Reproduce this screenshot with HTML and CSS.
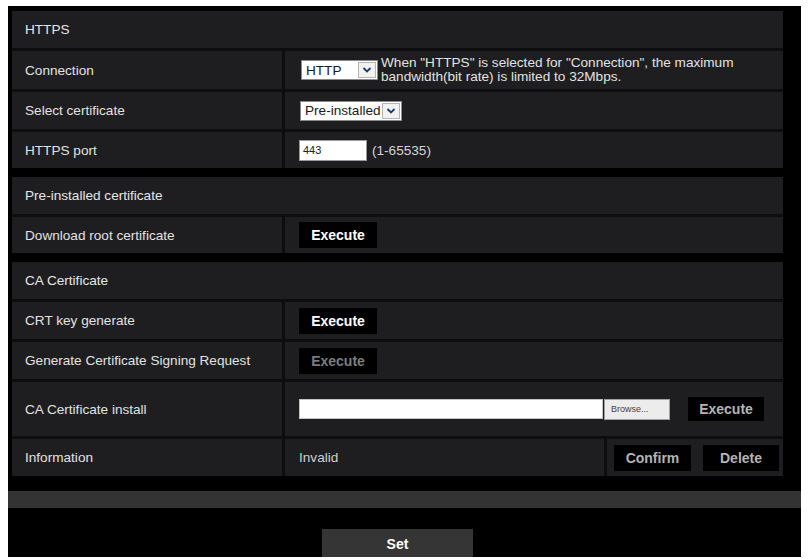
FILE: index.html
```html
<!DOCTYPE html>
<html lang="en">
<head>
  <meta charset="UTF-8">
  <title>HTTPS</title>
  <link rel="stylesheet" href="styles.css">
</head>
<body>
  <div class="frame">

    <!-- HTTPS connection settings -->
    <section class="group">
      <div class="group-head">HTTPS</div>
      <div class="row row-conn">
        <div class="label">Connection</div>
        <div class="value">
          <span class="select select-http">
            <span class="select-text">HTTP</span>
            <span class="select-arrow"><svg width="10" height="8" viewBox="0 0 10 8"><polyline points="1.5,2 5,5.5 8.5,2" fill="none" stroke="#1d3c6e" stroke-width="1.8"/></svg></span>
          </span>
          <span class="note">When "HTTPS" is selected for "Connection", the maximum<br>bandwidth(bit rate) is limited to 32Mbps.</span>
        </div>
      </div>
      <div class="row">
        <div class="label">Select certificate</div>
        <div class="value">
          <span class="select select-cert">
            <span class="select-text">Pre-installed</span>
            <span class="select-arrow"><svg width="10" height="8" viewBox="0 0 10 8"><polyline points="1.5,2 5,5.5 8.5,2" fill="none" stroke="#1d3c6e" stroke-width="1.8"/></svg></span>
          </span>
        </div>
      </div>
      <div class="row row-port">
        <div class="label">HTTPS port</div>
        <div class="value">
          <span class="field field-port">443</span>
          <span class="range">(1-65535)</span>
        </div>
      </div>
    </section>

    <!-- Pre-installed certificate -->
    <section class="group">
      <div class="group-head">Pre-installed certificate</div>
      <div class="row row-short">
        <div class="label">Download root certificate</div>
        <div class="value"><button class="btn">Execute</button></div>
      </div>
    </section>

    <!-- CA certificate -->
    <section class="group">
      <div class="group-head">CA Certificate</div>
      <div class="row">
        <div class="label">CRT key generate</div>
        <div class="value"><button class="btn">Execute</button></div>
      </div>
      <div class="row">
        <div class="label">Generate Certificate Signing Request</div>
        <div class="value"><button class="btn btn-disabled">Execute</button></div>
      </div>
      <div class="row row-install">
        <div class="label">CA Certificate install</div>
        <div class="value">
          <span class="field field-file"></span>
          <span class="browse">Browse...</span>
          <button class="btn btn-muted btn-install">Execute</button>
        </div>
      </div>
      <div class="row row-info">
        <div class="label">Information</div>
        <div class="value status">Invalid</div>
        <div class="value tools">
          <button class="btn btn-muted btn-confirm">Confirm</button>
          <button class="btn btn-muted btn-delete">Delete</button>
        </div>
      </div>
    </section>

    <div class="bar"></div>

    <div class="actions">
      <button class="btn-set">Set</button>
    </div>
  </div>
</body>
</html>
```

FILE: styles.css
```css
body {
  margin: 0;
  background: #fff;
  font-family: "Liberation Sans", Arial, sans-serif;
}
.frame {
  margin: 6px 0 0 8px;
  width: 793px;
  height: 551px;
  box-sizing: border-box;
  padding: 5px 18px 0 4px;
  background: #000;
  overflow: hidden;
}
.group {
  display: flex;
  flex-direction: column;
  gap: 3px;
  background: #0d0d0e;
}
.group + .group {
  margin-top: 9px;
}
.group-head {
  height: 37px;
  display: flex;
  align-items: center;
  padding-left: 13px;
  background: #1e1e20;
  color: #e6e6e6;
  font-size: 13.6px;
}
.row {
  display: grid;
  grid-template-columns: 270px 1fr;
  column-gap: 3px;
  height: 37px;
}
.row-conn {
  height: 38px;
}
.row-port,
.row-short {
  height: 36px;
}
.row-install {
  height: 54px;
}
.row-info {
  grid-template-columns: 270px 1fr 176px;
}
.label,
.value {
  display: flex;
  align-items: center;
  padding-left: 13px;
  background: #1e1e20;
  color: #e2e2e2;
  font-size: 13.6px;
}
.value {
  padding-left: 14px;
}

/* drop-down lists */
.select {
  display: inline-flex;
  align-items: center;
  height: 20px;
  box-sizing: border-box;
  border: 1px solid #8a8a8a;
  background: #fff;
  color: #1a1a1a;
  flex: none;
}
.select-text {
  flex: 1;
  padding-left: 4px;
  font-size: 13.6px;
}
.select-http {
  width: 77px;
  margin-left: 2px;
}
.select-cert {
  width: 102px;
  margin-left: 1px;
}
.select-arrow {
  width: 18px;
  height: 16px;
  margin-right: 1px;
  box-sizing: border-box;
  border: 1px solid #b5b5b5;
  background: #f2f2f2;
  display: flex;
  align-items: center;
  justify-content: center;
}
.note {
  margin-left: 3px;
  line-height: 14px;
  font-size: 13.6px;
  color: #e2e2e2;
}

/* text fields */
.field {
  display: inline-flex;
  align-items: center;
  height: 21px;
  box-sizing: border-box;
  border: 1px solid #9a9a9a;
  background: #fff;
  color: #222;
  font-size: 11px;
  padding-left: 3px;
}
.field-port {
  width: 68px;
}
.range {
  margin-left: 5px;
  color: #d4d4d4;
}
.field-file {
  width: 304px;
  height: 20px;
  border-color: #c4c4c4;
}
.browse {
  width: 66px;
  height: 21px;
  box-sizing: border-box;
  margin-left: 1px;
  border: 1px solid #a0a0a0;
  background: #ececec;
  color: #444;
  font-size: 9px;
  display: flex;
  align-items: center;
  padding-left: 6px;
}

/* buttons */
.btn {
  width: 78px;
  height: 26px;
  border: 0;
  background: #000;
  color: #fff;
  font-family: inherit;
  font-weight: bold;
  font-size: 14px;
  padding: 0;
}
.btn-disabled {
  color: #7c7c7c;
}
.btn-muted {
  color: #b4b4b4;
}
.btn-install {
  width: 76px;
  height: 24px;
  margin-left: 18px;
}
.tools {
  padding-left: 7px;
  gap: 12px;
}
.btn-confirm {
  width: 77px;
}
.btn-delete {
  width: 76px;
}
.status {
  color: #cfcfcf;
}
.bar {
  height: 17px;
  margin: 15px -18px 0 -4px;
  background: #333;
}
.actions {
  display: flex;
  justify-content: center;
  padding-top: 21px;
}
.btn-set {
  width: 151px;
  height: 30px;
  border: 0;
  background: #353535;
  color: #fff;
  font-family: inherit;
  font-weight: bold;
  font-size: 14px;
}
```
